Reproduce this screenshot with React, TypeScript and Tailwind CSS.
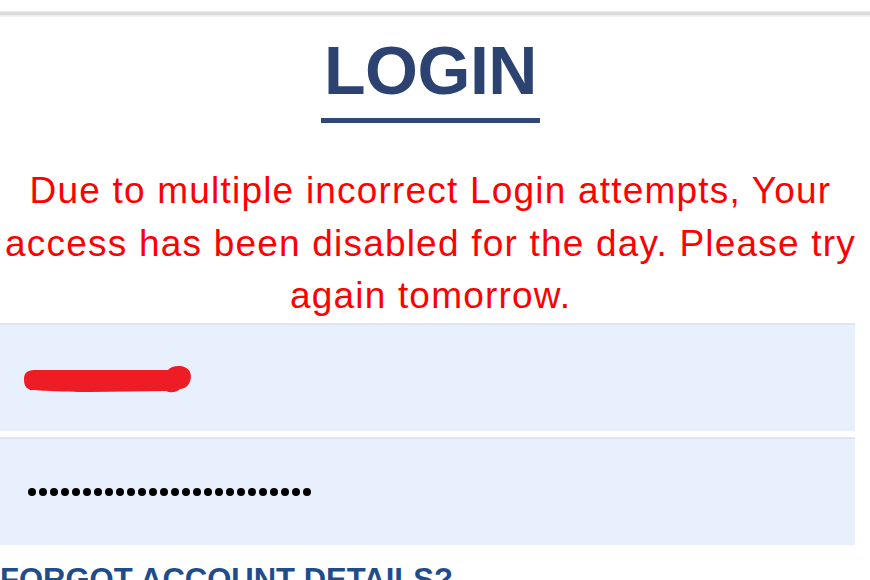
import React from 'react';

const DOTS = Array.from({ length: 26 });

export default function App() {
  return (
    <div className="w-[870px] h-[580px] overflow-hidden bg-white font-['Liberation_Sans',Arial,sans-serif]">
      {/* top rule */}
      <div className="pt-[11px]">
        <div className="h-[1px] bg-[#ececec]" />
        <div className="h-[3px] bg-[#dcdcdc]" />
        <div className="h-[2px] bg-[#f1f1f1]" />
      </div>

      <div className="w-[861px] flex flex-col items-center pt-[19px]">
        <h1 className="text-[68px] leading-[68px] font-bold text-[#2c4372] tracking-[-0.5px]">LOGIN</h1>
        <div className="mt-[14px] w-[219px] h-[5px] bg-[#2f4878]" />
        <p className="mt-[42px] w-[861px] text-center text-[37px] leading-[52.5px] tracking-[1.2px] text-[#ff0000]">
          Due to multiple incorrect Login attempts, Your access has been disabled for the day. Please try again tomorrow.
        </p>
      </div>

      <div className="flex flex-col gap-[6px] w-[855px]">
        <div className="relative h-[108px] bg-[#e8f0fe] border-t-2 border-[#dde5f3] flex items-center pl-[28px]">
          <span className="mt-[10px] text-[22px] text-black tracking-[3px]">.....</span>
          {/* redaction scribble */}
          <svg className="absolute left-[20px] top-[38px]" width="174" height="32" viewBox="0 0 174 32">
            <path
              d="M4 16 C4 9 8 7 16 7 L148 7 C152 2 166 1 170 9 C173 17 168 26 160 26 C156 30 150 30 146 28 L70 29 C50 29 24 28 12 27 C5 26 4 21 4 16 Z"
              fill="#ee1c25"
            />
          </svg>
        </div>
        <div className="h-[108px] bg-[#e8f0fe] border-t-2 border-[#dde5f3] flex items-center pl-[28px]">
          <div className="flex gap-[3px]">
            {DOTS.map((_, i) => (
              <span key={i} className="w-[8px] h-[8px] rounded-full bg-black" />
            ))}
          </div>
        </div>
      </div>

      <div className="pt-[18px] text-[31px] leading-[34px] font-bold text-[#1f4d8c] whitespace-nowrap">
        FORGOT ACCOUNT DETAILS?
      </div>
    </div>
  );
}
